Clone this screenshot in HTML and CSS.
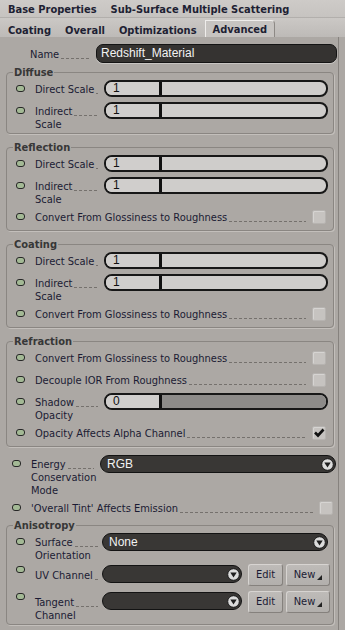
FILE: index.html
```html
<!DOCTYPE html>
<html lang="en">
<head>
    <meta charset="UTF-8">
    <meta name="viewport" content="width=device-width, initial-scale=1.0">
    <title>Redshift Material - Advanced</title>
    <link rel="stylesheet" href="styles.css">
</head>
<body>
    <div class="tab-row">
        <span class="tab">Base Properties</span>
        <span class="tab">Sub-Surface Multiple Scattering</span>
    </div>
    <div class="tab-row tab-row-front">
        <span class="tab">Coating</span>
        <span class="tab">Overall</span>
        <span class="tab">Optimizations</span>
        <span class="tab active">Advanced</span>
    </div>

    <div class="panel">
        <div class="name-row">
            <span class="label"><span class="first"><span class="txt">Name</span><i class="lead"></i></span></span>
            <div class="text-field">Redshift_Material</div>
        </div>

        <fieldset class="group">
            <legend>Diffuse</legend>
            <div class="row">
                <span class="led"></span>
                <span class="label"><span class="first"><span class="txt">Direct Scale</span><i class="lead"></i></span></span>
                <div class="slider"><span class="value">1</span><span class="track"></span></div>
            </div>
            <div class="row">
                <span class="led"></span>
                <span class="label"><span class="first"><span class="txt">Indirect</span><i class="lead"></i></span>Scale</span>
                <div class="slider"><span class="value">1</span><span class="track"></span></div>
            </div>
        </fieldset>

        <fieldset class="group">
            <legend>Reflection</legend>
            <div class="row">
                <span class="led"></span>
                <span class="label"><span class="first"><span class="txt">Direct Scale</span><i class="lead"></i></span></span>
                <div class="slider"><span class="value">1</span><span class="track"></span></div>
            </div>
            <div class="row">
                <span class="led"></span>
                <span class="label"><span class="first"><span class="txt">Indirect</span><i class="lead"></i></span>Scale</span>
                <div class="slider"><span class="value">1</span><span class="track"></span></div>
            </div>
            <div class="row">
                <span class="led"></span>
                <span class="label wide"><span class="first"><span class="txt">Convert From Glossiness to Roughness</span><i class="lead"></i></span></span>
                <span class="check"></span>
            </div>
        </fieldset>

        <fieldset class="group">
            <legend>Coating</legend>
            <div class="row">
                <span class="led"></span>
                <span class="label"><span class="first"><span class="txt">Direct Scale</span><i class="lead"></i></span></span>
                <div class="slider"><span class="value">1</span><span class="track"></span></div>
            </div>
            <div class="row">
                <span class="led"></span>
                <span class="label"><span class="first"><span class="txt">Indirect</span><i class="lead"></i></span>Scale</span>
                <div class="slider"><span class="value">1</span><span class="track"></span></div>
            </div>
            <div class="row">
                <span class="led"></span>
                <span class="label wide"><span class="first"><span class="txt">Convert From Glossiness to Roughness</span><i class="lead"></i></span></span>
                <span class="check"></span>
            </div>
        </fieldset>

        <fieldset class="group">
            <legend>Refraction</legend>
            <div class="row">
                <span class="led"></span>
                <span class="label wide"><span class="first"><span class="txt">Convert From Glossiness to Roughness</span><i class="lead"></i></span></span>
                <span class="check"></span>
            </div>
            <div class="row">
                <span class="led"></span>
                <span class="label wide"><span class="first"><span class="txt">Decouple IOR From Roughness</span><i class="lead"></i></span></span>
                <span class="check"></span>
            </div>
            <div class="row">
                <span class="led"></span>
                <span class="label"><span class="first"><span class="txt">Shadow</span><i class="lead"></i></span>Opacity</span>
                <div class="slider empty"><span class="value">0</span><span class="track"></span></div>
            </div>
            <div class="row">
                <span class="led"></span>
                <span class="label wide"><span class="first"><span class="txt">Opacity Affects Alpha Channel</span><i class="lead"></i></span></span>
                <span class="check checked">
                    <svg width="12" height="12" viewBox="0 0 12 12"><path d="M2 5.5 L5 8.5 L10.5 2.5" fill="none" stroke="#111" stroke-width="2.6"/></svg>
                </span>
            </div>
        </fieldset>

        <div class="row solo energy">
            <span class="led"></span>
            <span class="label"><span class="first"><span class="txt">Energy</span><i class="lead"></i></span>Conservation Mode</span>
            <div class="dropdown">
                <span>RGB</span>
                <svg class="arrow" width="13" height="13" viewBox="0 0 13 13"><circle cx="6.5" cy="6.5" r="5.8" fill="#dcdcdc" stroke="#1c1c1c" stroke-width="1"/><path d="M3.3 4.6 H9.7 L6.5 9.6 Z" fill="#1e1e1e"/></svg>
            </div>
        </div>
        <div class="row solo">
            <span class="led"></span>
            <span class="label wide"><span class="first"><span class="txt">'Overall Tint' Affects Emission</span><i class="lead"></i></span></span>
            <span class="check"></span>
        </div>

        <fieldset class="group aniso">
            <legend>Anisotropy</legend>
            <div class="row">
                <span class="led"></span>
                <span class="label"><span class="first"><span class="txt">Surface</span><i class="lead"></i></span>Orientation</span>
                <div class="dropdown">
                    <span>None</span>
                    <svg class="arrow" width="13" height="13" viewBox="0 0 13 13"><circle cx="6.5" cy="6.5" r="5.8" fill="#dcdcdc" stroke="#1c1c1c" stroke-width="1"/><path d="M3.3 4.6 H9.7 L6.5 9.6 Z" fill="#1e1e1e"/></svg>
                </div>
            </div>
            <div class="row btn-row">
                <span class="led"></span>
                <span class="label"><span class="first"><span class="txt">UV Channel</span><i class="lead"></i></span></span>
                <div class="dropdown">
                    <span></span>
                    <svg class="arrow" width="13" height="13" viewBox="0 0 13 13"><circle cx="6.5" cy="6.5" r="5.8" fill="#dcdcdc" stroke="#1c1c1c" stroke-width="1"/><path d="M3.3 4.6 H9.7 L6.5 9.6 Z" fill="#1e1e1e"/></svg>
                </div>
                <button class="btn btn-edit">Edit</button>
                <button class="btn btn-new">New<svg width="5" height="5" viewBox="0 0 5 5"><path d="M5 0 V5 H0 Z" fill="#222"/></svg></button>
            </div>
            <div class="row btn-row">
                <span class="led"></span>
                <span class="label"><span class="first"><span class="txt">Tangent</span><i class="lead"></i></span>Channel</span>
                <div class="dropdown">
                    <span></span>
                    <svg class="arrow" width="13" height="13" viewBox="0 0 13 13"><circle cx="6.5" cy="6.5" r="5.8" fill="#dcdcdc" stroke="#1c1c1c" stroke-width="1"/><path d="M3.3 4.6 H9.7 L6.5 9.6 Z" fill="#1e1e1e"/></svg>
                </div>
                <button class="btn btn-edit">Edit</button>
                <button class="btn btn-new">New<svg width="5" height="5" viewBox="0 0 5 5"><path d="M5 0 V5 H0 Z" fill="#222"/></svg></button>
            </div>
        </fieldset>
    </div>
</body>
</html>
```

FILE: styles.css
```css
* {
    box-sizing: border-box;
}

body {
    margin: 0;
    width: 345px;
    min-height: 630px;
    background-color: #aca8a4;
    font-family: "DejaVu Sans Condensed", "Liberation Sans", Arial, sans-serif;
    font-size: 11px;
    line-height: 13px;
    color: #1b1b33;
}

/* tab strip */
.tab-row {
    display: flex;
    height: 18px;
    padding-left: 1px;
    background: linear-gradient(#cecbc8, #c6c3c0);
    border-bottom: 1px solid #b2afac;
}

.tab {
    padding: 3px 7px 0;
    font-weight: bold;
    color: #1e1f33;
    white-space: nowrap;
}

.tab-row-front {
    height: 19px;
    align-items: flex-end;
    border-bottom: none;
    background: linear-gradient(#cbc8c5, #bdbab7);
}

.tab.active {
    height: 17px;
    margin-left: 1px;
    padding-top: 2px;
    background-color: #c7c4c1;
    border: 1px solid #8d8985;
    border-top-color: #efedeb;
    border-left-color: #efedeb;
    border-bottom: none;
    border-top-right-radius: 4px;
}

/* main panel */
.panel {
    width: 339px;
    min-height: 593px;
    padding: 7px 2px 0 0;
    border-right: 1px solid #86827e;
}

.name-row {
    display: flex;
    padding-left: 30px;
}

.name-row .label {
    width: 60px;
    margin: 4px 6px 0 0;
}

.text-field {
    flex: 1;
    height: 19px;
    margin-right: -1px;
    padding-left: 4px;
    background-color: #353331;
    border: 1px solid #141414;
    border-radius: 7px;
    box-shadow: 0 1px 0 #c8c5c2;
    color: #f2f2f2;
    font: 12px/17px "Liberation Sans", Arial, sans-serif;
}

/* groups */
.group {
    min-width: 0;
    margin: 3px 2px 0 6px;
    padding: 1px 5px 5px 9px;
    border: 1px solid #8a8682;
    border-radius: 4px;
    box-shadow: 1px 1px 0 #c3bfbb;
}

.group + .group {
    margin-top: 7px;
}

.group legend {
    margin-left: -3px;
    padding: 0 1px;
    font-weight: bold;
    color: #373737;
}

.row {
    display: flex;
    align-items: flex-start;
    min-height: 17px;
}

.row + .row {
    margin-top: 5px;
}

.row.solo {
    padding-left: 12px;
}

.energy {
    margin-top: 8px;
}

.aniso {
    margin-top: 3px;
}

.led {
    flex-shrink: 0;
    width: 9px;
    height: 7px;
    margin: 5px 10px 0 0;
    background-color: #a3b995;
    border: 1px solid #272727;
    border-radius: 3px;
}

.label {
    flex-shrink: 0;
    width: 63px;
    margin: 3px 6px -3px 0;
}

.label.wide {
    flex: 1;
    width: auto;
    margin-right: 0;
}

.first {
    display: flex;
    align-items: flex-end;
}

.txt {
    white-space: nowrap;
}

.lead {
    flex: 1;
    height: 1px;
    margin: 0 0 2px 2px;
    background: repeating-linear-gradient(90deg, #75716d 0 3px, transparent 3px 5px);
}

/* controls */
.slider {
    flex: 1;
    display: flex;
    height: 17px;
    background-color: #cfcdcb;
    border: 2px solid #171717;
    border-radius: 8px;
    overflow: hidden;
}

.slider .value {
    width: 56px;
    padding-left: 7px;
    border-right: 3px solid #111;
    background-color: #d0cecc;
    color: #111;
    font: 12px/13px "Liberation Sans", Arial, sans-serif;
}

.slider .track {
    flex: 1;
}

.slider.empty .track {
    background-color: #8d8b89;
}

.check {
    flex-shrink: 0;
    display: flex;
    align-items: center;
    justify-content: center;
    width: 14px;
    height: 14px;
    margin: 2px 2px 0 6px;
    background-color: #c6c3c0;
    border: 1px solid #b6b3b0;
    border-radius: 2px;
    box-shadow: inset 1px 1px 0 #d6d4d2;
}

.solo .check {
    margin-right: 3px;
}

.dropdown {
    flex: 1;
    display: flex;
    align-items: center;
    justify-content: space-between;
    height: 18px;
    padding: 0 1px 0 6px;
    background-color: #393735;
    border: 1px solid #131313;
    border-radius: 9px;
    color: #f2f2f2;
    font: 12px/16px "Liberation Sans", Arial, sans-serif;
}

.group .dropdown {
    margin-left: -2px;
}

.arrow {
    display: block;
}

.btn-row .led {
    margin-top: 2px;
}

.btn-row .label {
    margin-top: 5px;
}

.btn-row .dropdown {
    margin-top: 1px;
}

.btn {
    display: flex;
    align-items: flex-end;
    justify-content: center;
    height: 22px;
    padding: 0 0 4px;
    background: linear-gradient(#bebbb8, #b2afac);
    border: 1px solid;
    border-color: #d7d4d1 #85817d #85817d #d7d4d1;
    border-radius: 3px;
    color: #1b1b33;
    font: inherit;
}

.btn-edit {
    width: 35px;
    margin-left: 6px;
}

.btn-new {
    width: 44px;
    margin: 0 -2px 0 3px;
    gap: 2px;
}

.btn-new svg {
    margin-bottom: 1px;
}
```
